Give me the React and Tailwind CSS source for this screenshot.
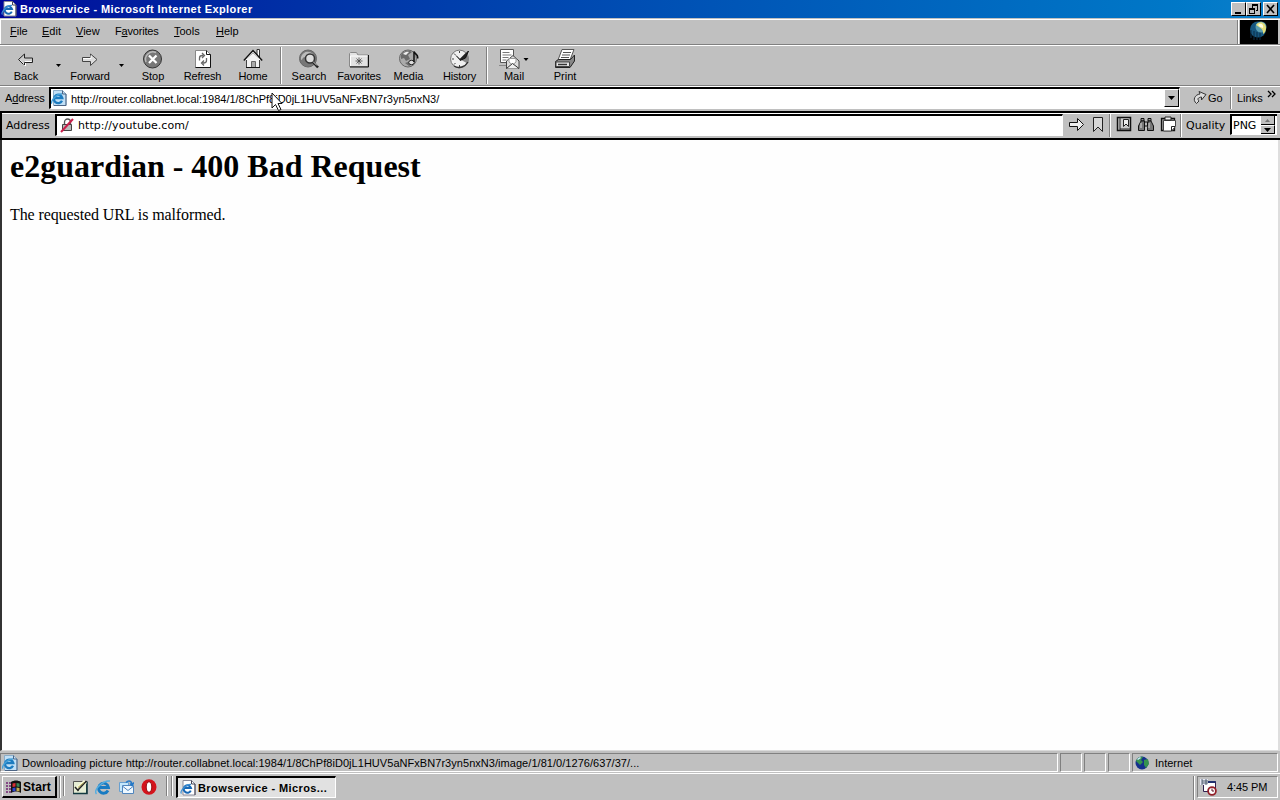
import React from "react";

const Svg = ({ w = 20, h = 20, className = "", crisp = false, children }) => (
  <svg width={w} height={h} viewBox={`0 0 ${w} ${h}`} className={`block shrink-0 ${className}`} shapeRendering={crisp ? "crispEdges" : "auto"} fill="none">
    {children}
  </svg>
);

const PageIcon = () => (
  <Svg w={16} h={16}>
    <path d="M3 .5h8.500l3.500 3.500v11H3z" fill="#fff" stroke="#8a8a99" />
    <path d="M11.500 .5v3.500H15v11" stroke="#445" />
    <path d="M10.800 10.600A3.700 3.700 0 1 1 11 8H4.500" stroke="#1868b5" strokeWidth="2" />
    <path d="M1.500 13.500C-1 12 6 4 11 4.500" stroke="#3b8fd4" strokeWidth="1.200" />
  </Svg>
);
const BluePageIcon = () => (
  <Svg w={16} h={16}>
    <path d="M2.500 .5h9l3.500 3.500v11.500H2.500z" fill="#c2e0f6" stroke="#8badc8" />
    <path d="M11.500 .5v3.500H15v11.500H3" stroke="#4c6484" />
    <path d="M11 10.800A4.200 4.200 0 1 1 11.300 8H4" stroke="#1d7cc0" strokeWidth="2.300" />
    <path d="M1 13.500C-1 12 5 3.500 11 4" stroke="#45a0d8" strokeWidth="1.400" />
  </Svg>
);

const BackIcon = () => (
  <Svg>
    <path d="M2.500 11 8.500 5v3.500h8v5h-8V17z" fill="#ccc" />
    <path d="M9.500 13.500V17l-6-6" stroke="#fff" />
    <path d="M8.500 5v4h8v4.500h-8V16M2.500 10.500 8.500 5M2.500 10.500l5 5" stroke="#222" />
    <path d="M9 12.500h6.500" stroke="#fff" />
  </Svg>
);
const ForwardIcon = () => (
  <Svg>
    <path d="M2.500 8.500h8V5l6.500 5.500-6.500 6v-4h-8z" fill="#ddd" stroke="#444" />
    <path d="M3 9.500h8V6.500" stroke="#fff" />
  </Svg>
);
const StopIcon = () => (
  <Svg>
    <circle cx="9.500" cy="10" r="9" fill="#777" stroke="#333" />
    <path d="M3 13A7.500 7.500 0 0 1 13 3.500" stroke="#bbb" strokeWidth="1.500" />
    <path d="m6 6.500 7.500 7.500m0-7.500L6 14" stroke="#fff" strokeWidth="2.300" />
  </Svg>
);
const RefreshIcon = () => (
  <Svg>
    <path d="M2.500 1.500h11l4 4v13h-15z" fill="#fff" stroke="#888" />
    <path d="M13.500 1.500v4h4v13h-15" stroke="#111" />
    <path d="M6.500 11.500V9c0-1.500 1-2.500 3-2.500h1M9 4l2.500 2.500L9 9M13.500 9v2.500c0 1.500-1 2.500-3 2.500h-1m1.500-2.500L8.500 14l2.500 2.500" stroke="#666" strokeWidth="1.300" />
  </Svg>
);
const HomeIcon = () => (
  <Svg>
    <path d="M3.500 10.500 10 4l6.500 6.500v8h-13z" fill="#f2f2f2" stroke="#444" />
    <path d="M14 .5h2.500V9L14 6z" fill="#fff" stroke="#333" />
    <path d="m.8 11.500 9.200-10 9.200 10" stroke="#111" strokeWidth="1.400" />
    <path d="m3 11 7-7.500 7 7.500" stroke="#fff" />
    <path d="M8.500 12.500h4v6h-4z" fill="#aaa" stroke="#666" />
    <path d="M3 18.500h14" stroke="#111" />
  </Svg>
);
const SearchIcon = () => (
  <Svg>
    <circle cx="9" cy="9.500" r="8.500" fill="#777" stroke="#666" />
    <path d="M2 8c2-5 7-7 12-3-4 0-5 3-8 3s-2 3-4 3z" fill="#bbb" />
    <circle cx="11" cy="9.500" r="4.500" fill="#ddd" stroke="#333" strokeWidth="1.500" />
    <path d="m14 13 5 5.500" stroke="#222" strokeWidth="2.500" />
    <path d="m14 12.500 4 4" stroke="#ddd" />
  </Svg>
);
const FavoritesIcon = () => (
  <Svg>
    <path d="M.5 17.500v-13l1-1h6l1.500 2.500h10v11.500z" fill="#e2e2e2" stroke="#888" />
    <path d="M19.500 6v12H1" stroke="#111" />
    <path d="M1.500 17V7h17" stroke="#fff" />
    <path d="M10 8.500v7M6.500 12h7M7.500 9.500l5 5m0-5-5 5" stroke="#444" strokeWidth=".8" />
  </Svg>
);
const MediaIcon = () => (
  <Svg>
    <circle cx="9" cy="9.500" r="8.500" fill="#aaa" stroke="#666" />
    <path d="M2 6c3-5 8-5 11-3l-4 3 2 4-4 2-2-3-3 1zM6 14l6-2 2 3-4 2z" fill="#6a6a6a" />
    <path d="M4 5c3-3 5-2 6-2L7 6z" fill="#eee" />
    <ellipse cx="12.500" cy="13.500" rx="2.800" ry="2.200" fill="#ddd" stroke="#222" />
    <path d="M15 13V2.500c1 3 5 3 3.500 7" stroke="#111" strokeWidth="1.500" />
  </Svg>
);
const HistoryIcon = () => (
  <Svg>
    <circle cx="9.500" cy="10" r="8.900" fill="#f0f0f0" stroke="#777" />
    <path d="M9.500 10 16 3.500a9 9 0 0 1 1.500 11z" fill="#888" />
    <path d="M9.500 2v2M2 10h2M9.500 16v2M4 4.500l1.500 1.500M4 15.500 5.500 14" stroke="#444" />
    <path d="m6 6.500 4 4L18.500 2l-3 7-5.500 2.500" fill="#222" stroke="#111" />
    <path d="M4 17c5 3 11 1 14-4" stroke="#333" strokeWidth="1.400" />
  </Svg>
);
const MailIcon = () => (
  <Svg w={32}>
    <path d="M2.500 .5h13v13h-13z" fill="#fff" stroke="#555" />
    <path d="M4.500 3.500h7m-7 2.500h9M4.500 8.500h6m-6 2.500h4" stroke="#777" />
    <path d="M1 16.500h7" stroke="#888" />
    <path d="M8.500 12 15 6.500l6 5.500v7.500H8.500z" fill="#ddd" stroke="#444" />
    <path d="M11 13V9.500h7V13l-3.500 3z" fill="#fff" stroke="#999" />
    <path d="m8.500 19.500 6-5 6.500 5" stroke="#333" fill="#eee" />
    <path d="M25.500 9h5l-2.500 3z" fill="#000" />
  </Svg>
);
const PrintIcon = () => (
  <Svg>
    <path d="M7 .5h12L15 11H3z" fill="#fff" stroke="#555" />
    <path d="M8 3.500h8M7 6h8M6 8.500h8" stroke="#555" />
    <path d="m.5 12.500 3-2h12l4-4.500v6l-4.500 6.500H.5z" fill="#888" stroke="#222" />
    <path d="M1 13h13.500v4.500H1z" fill="#e6e6e6" stroke="#444" />
    <path d="M3 15.500h9" stroke="#333" strokeWidth="1.500" />
  </Svg>
);

const Sep = ({ className = "" }) => <div className={`w-[2px] shrink-0 border-l border-r border-l-[#808080] border-r-white ${className}`} />;
const Tool = ({ icon, label, w, t = "" }) => (
  <div className={`flex shrink-0 flex-col items-center pt-[3px] ${w}`}>
    {icon}
    <span className={`mt-px text-[11px] leading-[13px] ${t}`}>{label}</span>
  </div>
);
const Drop = ({ w }) => (
  <div className={`flex shrink-0 justify-center pt-[18px] ${w}`}>
    <Svg w={5} h={3}><path d="M0 0h5L2.500 3z" fill="#000" /></Svg>
  </div>
);
const Menu = ({ k, pre = "", rest, w, t = "" }) => (
  <span className={`shrink-0 ${w} ${t}`}>{pre}<span className="underline underline-offset-1">{k}</span>{rest}</span>
);
const WinBtn = ({ children, className = "" }) => (
  <div className={`h-[14px] w-[15px] border border-b-black border-l-white border-r-black border-t-white bg-[#c0c0c0] ${className}`}>
    <Svg w={13} h={12} crisp>{children}</Svg>
  </div>
);
const Well = ({ w, children }) => (
  <div className={`flex h-[19px] shrink-0 items-center border border-b-white border-l-[#808080] border-r-white border-t-[#808080] ${w}`}>{children}</div>
);

export default function App() {
  return (
    <div className="flex h-[800px] w-[1280px] flex-col overflow-hidden bg-[#c0c0c0] font-['Liberation_Sans',Arial,sans-serif] text-[11px] text-black">
      <header className="flex h-[18px] shrink-0 items-center bg-linear-to-r from-[#00059a] to-[#0c80cb] pl-px pr-[2px]">
        <PageIcon />
        <span className="ml-[3px] text-[11px] font-bold tracking-[0.41px] text-white">Browservice - Microsoft Internet Explorer</span>
        <div className="ml-auto flex">
          <WinBtn><path d="M3 9h6v2H3z" fill="#000" /></WinBtn>
          <WinBtn><path d="M5 1.500h6M5 2.500h6M5.500 3v2M10.500 3v4H9M2 5.500h6M2 6.500h6M2.500 6v4h5V6" stroke="#000" /></WinBtn>
          <WinBtn className="ml-[2px]"><path d="m3 2 7 8m0-8-7 8" stroke="#000" strokeWidth="1.600" shapeRendering="auto" /></WinBtn>
        </div>
      </header>

      <nav className="mt-px flex h-[26px] shrink-0 border-b border-t border-b-[#808080] border-t-white">
        <div className="flex flex-1 items-center border-l border-white pb-[2px] pl-[9px]">
          <Menu k="F" rest="ile" w="w-[32px]" />
          <Menu k="E" rest="dit" w="w-[34px]" />
          <Menu k="V" rest="iew" w="w-[39px]" />
          <Menu pre="F" k="a" rest="vorites" w="w-[59px]" t="tracking-[-0.2px]" />
          <Menu k="T" rest="ools" w="w-[42px]" />
          <Menu k="H" rest="elp" w="w-[40px]" />
        </div>
        <Sep className="mr-px" />
        <div className="mr-[2px] flex w-[38px] justify-center bg-black">
          <Svg w={24} h={22}>
            <circle cx="11" cy="9.500" r="8" fill="#17577f" />
            <path d="M4 10v8m3-7v9m3-8v8m3-8v8" stroke="#0a2e49" />
            <circle cx="14" cy="7" r="5.500" fill="#5b9db0" />
            <path d="M9 5c3-5 10-3 10 3 0 3-1 5-3 6 1-5-3-6-7-9z" fill="#e4df7a" />
            <path d="M11 5c3-3 6 0 5 3l-3-1z" fill="#fffde0" />
          </Svg>
        </div>
      </nav>

      <section className="flex h-[41px] shrink-0 border-b border-t border-b-[#808080] border-t-white pl-[2px]">
        <Tool icon={<BackIcon />} label="Back" w="w-[48px]" />
        <Drop w="w-[16px]" />
        <Tool icon={<ForwardIcon />} label="Forward" w="w-[48px]" t="tracking-[-0.15px]" />
        <Drop w="w-[14px]" />
        <Tool icon={<StopIcon />} label="Stop" w="w-[50px]" />
        <Tool icon={<RefreshIcon />} label="Refresh" w="w-[49px]" t="tracking-[-0.15px]" />
        <Tool icon={<HomeIcon />} label="Home" w="w-[52px]" t="tracking-[-0.1px]" />
        <Sep className="mx-px my-px" />
        <Tool icon={<SearchIcon />} label="Search" w="w-[52px]" />
        <Tool icon={<FavoritesIcon />} label="Favorites" w="w-[48px]" t="tracking-[-0.2px]" />
        <Tool icon={<MediaIcon />} label="Media" w="w-[51px]" />
        <Tool icon={<HistoryIcon />} label="History" w="w-[51px]" t="tracking-[-0.15px]" />
        <Sep className="mx-px my-px" />
        <Tool icon={<MailIcon />} label="Mail" w="w-[50px]" />
        <Tool icon={<PrintIcon />} label="Print" w="w-[52px]" />
      </section>

      <section className="flex h-[25px] shrink-0 border-t border-white pl-[5px]">
        <span className="w-[44px] shrink-0 pt-[3px] tracking-[-0.1px]">A<span className="underline underline-offset-1">d</span>dress</span>
        <div className="flex h-[22px] w-[1131px] shrink-0 border-b border-l-2 border-r border-t-2 border-b-white border-l-black border-r-white border-t-black bg-white">
          <div className="pt-px"><BluePageIcon /></div>
          <span className="ml-[4px] pt-[2px] tracking-[-0.015px]">http://router.collabnet.local:1984/1/8ChPf8iD0jL1HUV5aNFxBN7r3yn5nxN3/</span>
          <div className="ml-auto flex h-[18px] w-[15px] items-center justify-center border border-b-black border-l-white border-r-black border-t-white bg-[#c0c0c0]">
            <Svg w={7} h={4}><path d="M0 0h7L3.500 4z" fill="#000" /></Svg>
          </div>
        </div>
        <div className="ml-[13px] flex w-[37px] shrink-0 pt-[3px]">
          <Svg w={14} h={14}>
            <path d="M3.500 13.500C-1 10 2 4.500 7 4L6 1.500l7 3-4.500 5.500V7C5 7.500 4 9 6 11z" fill="#ddd" stroke="#333" />
          </Svg>
          <span className="ml-px text-[11px] leading-[16px]">Go</span>
        </div>
        <Sep className="h-[22px]" />
        <span className="ml-[5px] pt-[3px]">Links</span>
        <Svg w={9} h={9} className="ml-[4px] mt-[3px]"><path d="m1 1 3 3-3 3m4-6 3 3-3 3" stroke="#000" strokeWidth="1.300" /></Svg>
      </section>

      <section className="flex h-[29px] shrink-0 border-b-2 border-l-2 border-t-2 border-b-black border-l-black border-t-black bg-[#c0c0c0] font-['DejaVu_Sans',sans-serif]">
        <div className="flex flex-1 border-b border-t border-b-[#c0c0c0] border-t-white pl-[4px]">
          <span className="w-[49px] shrink-0 pt-[4px] text-[11px] leading-[15px]">Address</span>
          <div className="flex h-[22px] w-[1008px] shrink-0 border-b border-l-2 border-r border-t-2 border-b-white border-l-black border-r-white border-t-black bg-white">
            <Svg w={14} h={16} className="ml-[3px] mt-px">
              <path d="M4.500 8V5a3 3 0 0 1 6 0v3" stroke="#555" strokeWidth="1.300" />
              <path d="M2.500 7.500h9v6h-9z" fill="#bbb" stroke="#444" />
              <path d="M1 15 13 2" stroke="#c9204c" strokeWidth="2" />
            </Svg>
            <span className="ml-[4px] pt-[2px] text-[11px] leading-[15px] tracking-[0.06px]">http://youtube.com/</span>
          </div>
          <div className="ml-[5px] flex w-[41px] shrink-0 pt-[2px]">
            <Svg w={18} h={17}><path d="M1.500 6.500h8v-4l6 6-6 6v-4h-8z" fill="#eee" stroke="#111" /></Svg>
            <Svg w={16} h={17} className="ml-[4px]"><path d="M3.500 1.500h9v14L8 11l-4.500 4.500z" fill="#d8d8d8" stroke="#222" /></Svg>
          </div>
          <Sep className="h-[23px]" />
          <div className="ml-[5px] flex w-[65px] shrink-0 gap-[6px] pt-[2px]">
            <Svg w={16} h={17}>
              <path d="M1.500 1.500h13v13h-13z" fill="#ccc" stroke="#111" strokeWidth="1.500" />
              <path d="M4 1v13.500M4 13h11" stroke="#222" />
              <path d="M7.500 3.500h5v7l-2.500-2.500-2.500 2.500z" fill="#eee" stroke="#222" />
            </Svg>
            <Svg w={16} h={17}>
              <path d="M3 2.500h3V5H3zm7 0h3V5h-3z" fill="#999" stroke="#111" />
              <path d="M3 5h3.500v9.500h-6V10zm7 0h3l2.500 5v4.500h-6z" fill="#777" stroke="#111" />
              <path d="M6.500 6h3v4h-3z" fill="#bbb" stroke="#111" />
              <path d="M3 7v5m8-5v5" stroke="#ddd" />
            </Svg>
            <Svg w={17} h={17}>
              <path d="M1.500 2.500h13v12h-13z" fill="#999" stroke="#111" strokeWidth="1.300" />
              <path d="M3.500 4.500h12v6l-4 4.500h-8z" fill="#fff" stroke="#444" />
              <path d="M15 10.500h-3.500V15" stroke="#222" />
              <path d="M5 1h6v3H5z" fill="#eee" stroke="#222" />
            </Svg>
          </div>
          <Sep className="-ml-px h-[23px]" />
          <span className="ml-[4px] w-[43px] shrink-0 pt-[4px] text-[11px] leading-[15px]">Quality</span>
          <div className="ml-px flex h-[21px] w-[47px] shrink-0 border-b border-l-2 border-t-2 border-b-white border-l-black border-t-black bg-white">
            <span className="w-[29px] pl-px pt-[2px] text-[11px] leading-[15px]">PNG</span>
            <div className="flex w-[14px] flex-col bg-[#c0c0c0]">
              <div className="flex h-[9px] items-center justify-center border-b border-r border-black"><Svg w={5} h={3}><path d="M0 3h5L2.500 0z" fill="#777" /></Svg></div>
              <div className="flex h-[9px] items-center justify-center border-b border-r border-t border-b-black border-r-black border-t-white"><Svg w={7} h={4}><path d="M0 0h7L3.500 4z" fill="#000" /></Svg></div>
            </div>
          </div>
        </div>
      </section>

      <main className="flex-1 border-b border-l-2 border-r-2 border-b-[#dadada] border-l-[#333] border-r-[#dedede] bg-[#fefefe] pl-[8px] pt-[8px] font-['Liberation_Serif',serif]">
        <h1 className="text-[32px] font-bold leading-[37px]">e2guardian - 400 Bad Request</h1>
        <p className="mt-[21px] text-[16px] leading-[18px] tracking-[-0.1px]">The requested URL is malformed.</p>
      </main>

      <footer className="flex h-[22px] shrink-0 gap-[2px] pr-[2px] pt-[2px]">
        <Well w="w-[1058px]">
          <div className="ml-px"><BluePageIcon /></div>
          <span className="ml-[4px] pt-px tracking-[0.045px]">Downloading picture http://router.collabnet.local:1984/1/8ChPf8iD0jL1HUV5aNFxBN7r3yn5nxN3/image/1/81/0/1276/637/37/...</span>
        </Well>
        <Well w="w-[22px]" />
        <Well w="w-[22px]" />
        <Well w="w-[22px]" />
        <Well w="w-[146px]">
          <Svg w={14} h={14} className="ml-[2px]">
            <circle cx="7" cy="7" r="6.500" fill="#15318c" />
            <path d="M1 5c1-4 5-5 7-4L6 4l2 2-3 3-2-2zM9 4l4-1 1 5-3 4-2-3z" fill="#35944f" />
            <path d="M2 3 5 1l1 1-3 2z" fill="#d0e8ff" />
          </Svg>
          <span className="ml-[6px] pt-px">Internet</span>
        </Well>
      </footer>

      <section className="flex h-[27px] shrink-0 border-t border-white pt-[2px]">
        <div className="ml-[2px] flex h-[22px] w-[55px] shrink-0 items-center border-b-2 border-l border-r-2 border-t border-b-black border-l-white border-r-black border-t-white pl-[3px]">
          <Svg w={16} h={16}>
            <path d="M5 3c3-2 7-2 10 0v11c-3-2-7-2-10 0z" fill="#111" />
            <path d="M6.500 4.500 9.500 4v3.500l-3 .5z" fill="#d82f35" />
            <path d="m10.500 4 3 .5V8l-3-.5z" fill="#3d8557" />
            <path d="m6.500 9 3-.5V12l-3 .5z" fill="#2d45d0" />
            <path d="m10.500 8.500 3 .5v3.500l-3-.5z" fill="#c4ab51" />
            <path d="M0 4h2m1 0h2M0 7h2m1 0h2M0 10h2m1 0h2M0 13h2m1 0h2" stroke="#702070" strokeWidth="1.500" />
          </Svg>
          <span className="ml-px text-[12px] font-bold tracking-[0.1px]">Start</span>
        </div>
        <Sep className="ml-[2px] h-[22px]" />
        <Sep className="ml-[2px] h-[20px]" />
        <div className="ml-[7px] flex w-[94px] shrink-0 gap-[7px] pt-[3px]">
          <Svg w={16} h={16}>
            <path d="M1.500 2.500h13v12h-13z" fill="#e5edd4" stroke="#555" />
            <path d="M1 14.500h14v-12" stroke="#123a40" strokeWidth="1.600" />
            <path d="M5 12 3 9l9-8 3 3z" fill="#fafada" />
            <path d="m6 11 8.500-9M3 8l3.500 4" stroke="#222" strokeWidth="1.500" />
            <path d="m6 8.500 6-5" stroke="#a9a34f" />
          </Svg>
          <Svg w={16} h={16}>
            <path d="M13 11.500A5 5 0 1 1 13.500 8.500H4" stroke="#187bc2" strokeWidth="2.800" />
            <path d="M1.500 15C-2 11 8 1 15 2" stroke="#55aee0" strokeWidth="1.500" />
          </Svg>
          <Svg w={16} h={16}>
            <path d="M1.500 3.500h9v9h-9z" fill="#c3e7fc" stroke="#69a0d0" />
            <path d="M4.500 6.500h11v8h-11z" fill="#eef8ff" stroke="#5085bd" />
            <path d="m5 7.500 5 4 5-4" stroke="#5085bd" />
            <path d="M8 3.500c3-3 6-1 6 2m-2-1 2 2 2-3" stroke="#2479c8" strokeWidth="1.500" />
          </Svg>
          <Svg w={16} h={16}>
            <ellipse cx="8" cy="8" rx="7.500" ry="7.800" fill="#d4131c" />
            <ellipse cx="8" cy="8" rx="2.800" ry="5.300" fill="#fff" stroke="#940d12" />
          </Svg>
        </div>
        <Sep className="h-[20px]" />
        <Sep className="ml-[3px] h-[20px]" />
        <div className="ml-[3px] flex h-[22px] w-[160px] shrink-0 items-center border-b border-l-2 border-r border-t-2 border-b-white border-l-black border-r-white border-t-black bg-[#e1e1e1] pl-[2px]">
          <PageIcon />
          <span className="ml-[2px] pt-px text-[11px] font-bold tracking-[0.41px]">Browservice - Micros...</span>
        </div>
        <Sep className="ml-auto mr-[2px] h-[24px]" />
        <div className="mr-[2px] flex h-[22px] w-[81px] items-center border border-b-white border-l-[#808080] border-r-white border-t-[#808080] pl-[2px]">
          <Svg w={17} h={17}>
            <path d="M3.500 2.500h12v10h-12z" fill="#fff" stroke="#302050" />
            <path d="M7 3h8.500" stroke="#203070" strokeWidth="2" />
            <path d="M0 0h8v6H0z" fill="#e8e8f4" />
            <path d="M1 1h2v2H1m2 0v2H1M5 1h2v4H5zm0 2h2" stroke="#345" strokeWidth=".8" />
            <circle cx="12" cy="12" r="3.900" fill="#fff" stroke="#922029" strokeWidth="1.800" />
            <path d="M12 9.500V12h2" stroke="#601020" />
          </Svg>
          <span className="ml-[10px] pt-px tracking-[-0.1px]">4:45 PM</span>
        </div>
      </section>

      <div className="absolute left-[271px] top-[92px]">
        <Svg w={12} h={20}>
          <path d="M1 1v15l3.500-3.500 3 6 2.500-1-3-6H11z" fill="#fff" stroke="#111" />
        </Svg>
      </div>
    </div>
  );
}
